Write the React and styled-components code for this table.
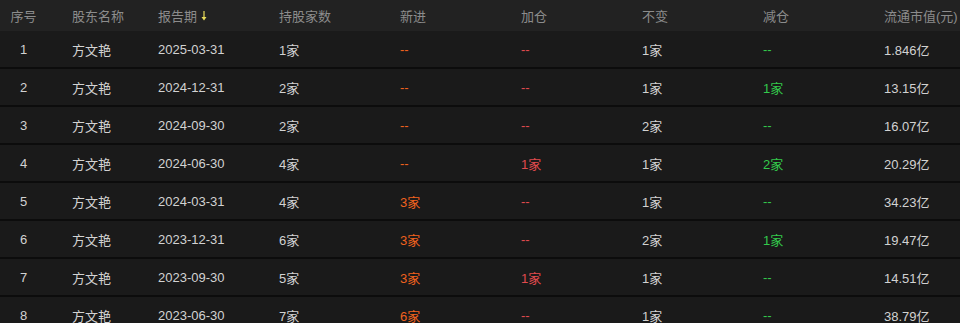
import React from "react";
import styled, { createGlobalStyle } from "styled-components";

const Global = createGlobalStyle`
  html, body { margin: 0; padding: 0; background: #1a1a1a; }
  body { font-family: "Liberation Sans", "Noto Sans CJK SC", sans-serif; }
`;

const Table = styled.div`
  width: 960px;
  background: #1a1a1a;
  font-size: 13px;
`;

const cols = "72px 86px repeat(6, 121px) 1fr";

const HeaderRow = styled.div`
  display: grid;
  grid-template-columns: ${cols};
  height: 31px;
  align-items: center;
  background: #222222;
  color: #8c8c8c;
`;

const Row = styled.div`
  display: grid;
  grid-template-columns: ${cols};
  height: 36px;
  align-items: center;
  background: #1a1a1a;
  border-bottom: 2px solid #0c0c0c;
  color: #d2d2d2;
`;

const Cell = styled.div`
  white-space: nowrap;
  display: flex;
  align-items: center;
  ${(p) => (p.$center ? "justify-content: center; padding-right: 25px;" : "")}
  color: ${(p) => p.$color || "inherit"};
`;

const SortIcon = styled.svg`
  margin-left: 4px;
  margin-top: 1px;
`;

const ORANGE = "#f0621e";
const RED = "#e04b4e";
const GREEN = "#33c94b";

const data = [
  ["1", "2025-03-31", "1家", "--", "--", "1家", "--", "1.846亿"],
  ["2", "2024-12-31", "2家", "--", "--", "1家", "1家", "13.15亿"],
  ["3", "2024-09-30", "2家", "--", "--", "2家", "--", "16.07亿"],
  ["4", "2024-06-30", "4家", "--", "1家", "1家", "2家", "20.29亿"],
  ["5", "2024-03-31", "4家", "3家", "--", "1家", "--", "34.23亿"],
  ["6", "2023-12-31", "6家", "3家", "--", "2家", "1家", "19.47亿"],
  ["7", "2023-09-30", "5家", "3家", "1家", "1家", "--", "14.51亿"],
  ["8", "2023-06-30", "7家", "6家", "--", "1家", "--", "38.79亿"],
];

export default function App() {
  return (
    <Table>
      <Global />
      <HeaderRow>
        <Cell $center>序号</Cell>
        <Cell>股东名称</Cell>
        <Cell>
          报告期
          <SortIcon width="6" height="10" viewBox="0 0 6 10">
            <line x1="3" y1="0" x2="3" y2="7" stroke="#e9dc5a" strokeWidth="1.2" />
            <path d="M0.5 6 L5.5 6 L3 9.5 Z" fill="#e9dc5a" />
          </SortIcon>
        </Cell>
        <Cell>持股家数</Cell>
        <Cell>新进</Cell>
        <Cell>加仓</Cell>
        <Cell>不变</Cell>
        <Cell>减仓</Cell>
        <Cell>流通市值(元)</Cell>
      </HeaderRow>
      {data.map((r) => (
        <Row key={r[0]}>
          <Cell $center>{r[0]}</Cell>
          <Cell>方文艳</Cell>
          <Cell>{r[1]}</Cell>
          <Cell>{r[2]}</Cell>
          <Cell $color={ORANGE}>{r[3]}</Cell>
          <Cell $color={RED}>{r[4]}</Cell>
          <Cell>{r[5]}</Cell>
          <Cell $color={GREEN}>{r[6]}</Cell>
          <Cell>{r[7]}</Cell>
        </Row>
      ))}
    </Table>
  );
}
